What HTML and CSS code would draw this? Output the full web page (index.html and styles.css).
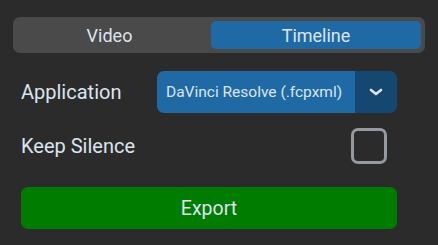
FILE: index.html
```html
<!DOCTYPE html>
<html lang="en">
<head>
    <meta charset="UTF-8">
    <title>Export</title>
    <link rel="stylesheet" href="styles.css">
</head>
<body>
    <div class="tabs">
        <button class="tab first">Video</button>
        <button class="tab active">Timeline</button>
    </div>
    <div class="panel">
        <div class="row">
            <label for="app">Application</label>
            <div class="dropdown" id="app">
                <span class="dropdown-value">DaVinci Resolve (.fcpxml)</span>
                <span class="dropdown-arrow">
                    <svg width="14" height="10" viewBox="0 0 14 10">
                        <path d="M2 3 L7 7 L12 3" fill="none" stroke="#dce4ee" stroke-width="2.6" stroke-linecap="round" stroke-linejoin="round"/>
                    </svg>
                </span>
            </div>
        </div>
        <div class="row">
            <label for="keep">Keep Silence</label>
            <span class="checkbox" id="keep"></span>
        </div>
        <button class="export">Export</button>
    </div>
</body>
</html>
```

FILE: styles.css
```css
body {
    margin: 0;
    background-color: #2b2b2b;
    font-family: Roboto, "Liberation Sans", sans-serif;
    color: #dce4ee;
}
.tabs {
    display: flex;
    margin: 17px 13px 0 13px;
    width: 412px;
    height: 36px;
    padding: 4px;
    box-sizing: border-box;
    background-color: #4a4a4a;
    border-radius: 7px;
}
.tab {
    flex: 1;
    border: none;
    background: none;
    color: #dce4ee;
    font-family: inherit;
    font-size: 18px;
    border-radius: 5px;
    padding: 0;
}
.tab.first {
    flex: 0 0 194px;
    padding-right: 9px;
}
.tab.active {
    background-color: #1f6aa5;
}
.panel {
    margin: 18px 41px 0 21px;
}
.row {
    display: flex;
    align-items: center;
    justify-content: space-between;
    height: 42px;
    margin-bottom: 12px;
}
.row label {
    font-size: 20px;
}
.dropdown {
    display: flex;
    width: 240px;
    height: 42px;
    border-radius: 7px;
    overflow: hidden;
}
.dropdown-value {
    flex: 1;
    display: flex;
    align-items: center;
    padding-left: 9px;
    background-color: #1f6aa5;
    font-size: 15.5px;
}
.dropdown-arrow {
    width: 42px;
    display: flex;
    align-items: center;
    justify-content: center;
    background-color: #144870;
}
.checkbox {
    width: 36px;
    height: 36px;
    box-sizing: border-box;
    border: 3px solid #949a9f;
    border-radius: 7px;
    margin-right: 10px;
}
.export {
    display: block;
    width: 100%;
    height: 42px;
    margin-top: 20px;
    border: none;
    border-radius: 7px;
    background-color: #007c00;
    color: #dce4ee;
    font-family: inherit;
    font-size: 19.5px;
}
```
